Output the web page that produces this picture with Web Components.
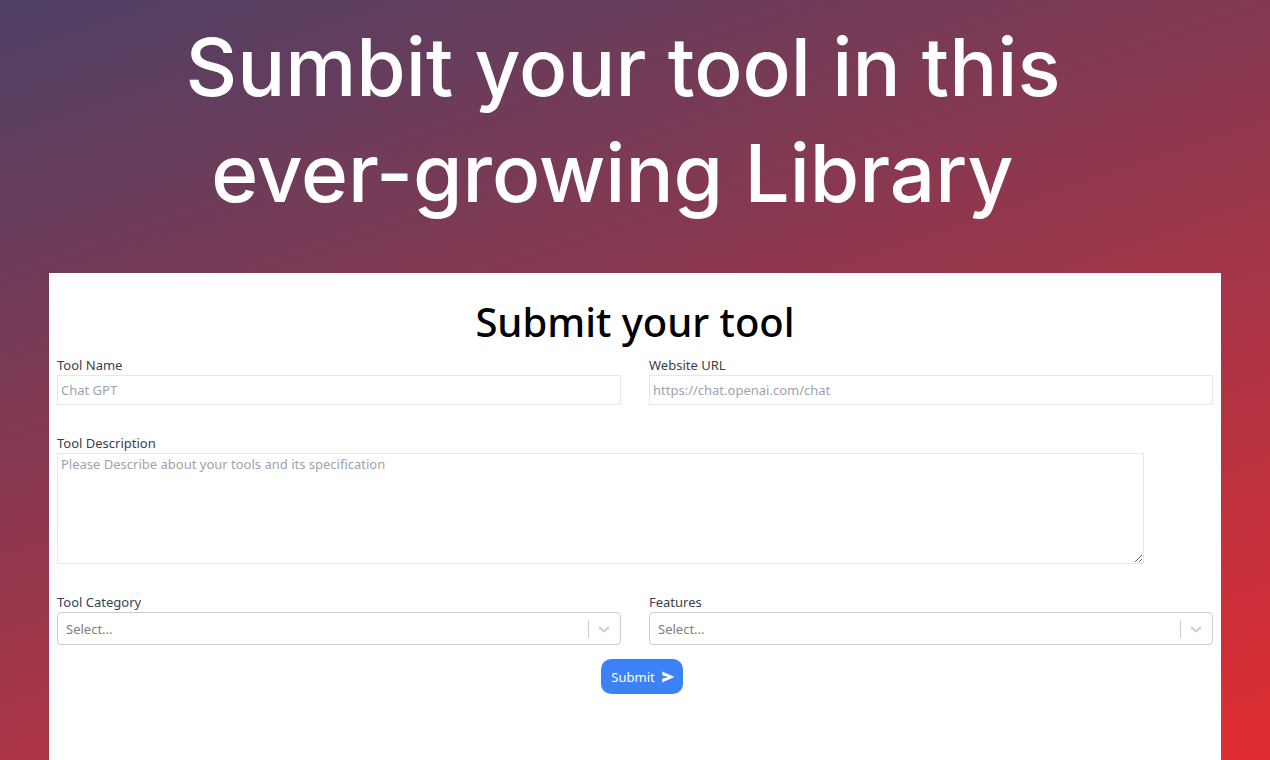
<!DOCTYPE html>
<html lang="en">
<head>
<meta charset="utf-8">
<meta name="viewport" content="width=device-width, initial-scale=1">
<title>Submit your tool</title>
<style>
    body{
        margin: 0;
        font-family: "Noto Sans", "Open Sans", sans-serif;
        font-size: 13px;
        line-height: 20px;
    }
</style>
</head>
<body>
<submit-page>
    <hero-title slot="hero">Sumbit your tool in this<br>ever-growing Library&nbsp;</hero-title>
    <tool-form heading="Submit your tool">
        <text-field name="name" label="Tool Name" placeholder="Chat GPT"></text-field>
        <text-field name="url" label="Website URL" placeholder="https://chat.openai.com/chat"></text-field>
        <area-field name="description" label="Tool Description" placeholder="Please Describe about your tools and its specification"></area-field>
        <select-field name="category" label="Tool Category" options="Writing,Image,Video,Code"></select-field>
        <select-field name="features" label="Features" options="Free,Freemium,Paid,API"></select-field>
        <submit-button slot="actions">Submit</submit-button>
    </tool-form>
</submit-page>

<script>
const fieldStyles = `
    :host{
        display: flex;
        flex-direction: column;
        min-width: 0;
    }
    label{
        color: #374151;
    }
    input, textarea, select{
        box-sizing: border-box;
        width: 100%;
        margin: 0;
        font: inherit;
        color: #374151;
        background: #fff;
        border: 1px solid #e5e7eb;
        border-radius: 0;
        outline: none;
    }
    input:focus, textarea:focus, select:focus{
        border-color: #3b82f6;
    }
    ::placeholder{
        color: #9ca3af;
        opacity: 1;
    }
`;

class SubmitPage extends HTMLElement{
    constructor(){
        super();
        this.attachShadow({mode: 'open'});
        this.shadowRoot.innerHTML = `
            <style>
                :host{
                    display: flex;
                    flex-direction: column;
                    min-height: 100vh;
                    background: linear-gradient(161deg, #4d4065, #e12d32);
                }
                main{
                    flex: 1;
                    display: flex;
                    margin: 0 49px;
                }
            </style>
            <slot name="hero"></slot>
            <main><slot></slot></main>
        `;
    }
}

class HeroTitle extends HTMLElement{
    constructor(){
        super();
        this.attachShadow({mode: 'open'});
        this.shadowRoot.innerHTML = `
            <style>
                :host{
                    display: block;
                    padding: 14px 24px 47px 0;
                }
                h1{
                    margin: 0;
                    font-family: Inter, sans-serif;
                    font-size: 80px;
                    font-weight: 500;
                    line-height: 106px;
                    text-align: center;
                    color: #fff;
                }
            </style>
            <h1><slot></slot></h1>
        `;
    }
}

class ToolForm extends HTMLElement{
    constructor(){
        super();
        this.attachShadow({mode: 'open'});
        this.shadowRoot.innerHTML = `
            <style>
                :host{
                    flex: 1;
                    min-width: 0;
                    box-sizing: border-box;
                    padding: 24px 8px;
                    background: #fff;
                }
                h2{
                    margin: 0 0 8px;
                    font-size: 40px;
                    font-weight: 500;
                    line-height: 50px;
                    text-align: center;
                    color: #000;
                }
                .fields{
                    display: grid;
                    grid-template-columns: repeat(2, minmax(0, 1fr));
                    gap: 28px;
                }
                .actions{
                    display: flex;
                    justify-content: center;
                    padding: 14px 0 24px 14px;
                }
            </style>
            <form>
                <h2></h2>
                <div class="fields"><slot></slot></div>
                <div class="actions"><slot name="actions"></slot></div>
            </form>
        `;
    }
    connectedCallback(){
        this.shadowRoot.querySelector('h2').textContent = this.getAttribute('heading');
        this.addEventListener('toolsubmit', () => {
            this.shadowRoot.querySelector('form').requestSubmit();
        });
        this.shadowRoot.querySelector('form').addEventListener('submit', (e) => {
            e.preventDefault();
        });
    }
}

class TextField extends HTMLElement{
    constructor(){
        super();
        this.attachShadow({mode: 'open'});
        this.shadowRoot.innerHTML = `
            <style>
                ${fieldStyles}
                input{
                    height: 30px;
                    padding: 0 3px;
                }
            </style>
            <label for="control"></label>
            <input id="control" type="text">
        `;
    }
    connectedCallback(){
        const control = this.shadowRoot.getElementById('control');
        this.shadowRoot.querySelector('label').textContent = this.getAttribute('label');
        control.name = this.getAttribute('name');
        control.placeholder = this.getAttribute('placeholder');
    }
}

class AreaField extends HTMLElement{
    constructor(){
        super();
        this.attachShadow({mode: 'open'});
        this.shadowRoot.innerHTML = `
            <style>
                ${fieldStyles}
                :host{
                    grid-column: 1 / -1;
                }
                textarea{
                    display: block;
                    width: 94%;
                    height: 111px;
                    padding: 0 3px;
                }
            </style>
            <label for="control"></label>
            <textarea id="control"></textarea>
        `;
    }
    connectedCallback(){
        const control = this.shadowRoot.getElementById('control');
        this.shadowRoot.querySelector('label').textContent = this.getAttribute('label');
        control.name = this.getAttribute('name');
        control.placeholder = this.getAttribute('placeholder');
    }
}

class SelectField extends HTMLElement{
    constructor(){
        super();
        this.attachShadow({mode: 'open'});
        this.shadowRoot.innerHTML = `
            <style>
                ${fieldStyles}
                .control{
                    display: grid;
                    align-items: center;
                }
                select, .indicator{
                    grid-area: 1 / 1;
                }
                select{
                    appearance: none;
                    height: 33px;
                    padding: 0 40px 0 8px;
                    color: #808080;
                    border-color: #ccc;
                    border-radius: 4px;
                }
                .indicator{
                    justify-self: end;
                    display: flex;
                    align-items: center;
                    box-sizing: border-box;
                    width: 33px;
                    height: 18px;
                    padding-left: 6px;
                    border-left: 1px solid #ccc;
                    pointer-events: none;
                }
                svg{
                    width: 18px;
                    height: 18px;
                    fill: #ccc;
                }
            </style>
            <label for="control"></label>
            <div class="control">
                <select id="control"><option value="">Select...</option></select>
                <span class="indicator">
                    <svg viewBox="0 0 20 20" aria-hidden="true"><path d="M4.516 7.548c0.436-0.446 1.043-0.481 1.576 0l3.908 3.747 3.908-3.747c0.533-0.481 1.141-0.446 1.574 0 0.436 0.445 0.408 1.197 0 1.615-0.406 0.418-4.695 4.502-4.695 4.502-0.217 0.223-0.502 0.335-0.787 0.335s-0.57-0.112-0.789-0.335c0 0-4.287-4.084-4.695-4.502s-0.436-1.17 0-1.615z"/></svg>
                </span>
            </div>
        `;
    }
    connectedCallback(){
        const control = this.shadowRoot.getElementById('control');
        this.shadowRoot.querySelector('label').textContent = this.getAttribute('label');
        control.name = this.getAttribute('name');
        this.getAttribute('options').split(',').forEach((text) => {
            control.add(new Option(text));
        });
    }
}

class SubmitButton extends HTMLElement{
    constructor(){
        super();
        this.attachShadow({mode: 'open'});
        this.shadowRoot.innerHTML = `
            <style>
                :host{
                    display: block;
                }
                button{
                    display: flex;
                    align-items: center;
                    gap: 6px;
                    height: 35px;
                    padding: 0 8px 0 10px;
                    font: inherit;
                    color: #fff;
                    background: #3b82f6;
                    border: none;
                    border-radius: 10px;
                    cursor: pointer;
                }
                button:hover{
                    background: #2563eb;
                }
                svg{
                    width: 14px;
                    height: 14px;
                    fill: #fff;
                }
            </style>
            <button type="button">
                <slot></slot>
                <svg viewBox="0 0 14 14" aria-hidden="true"><path d="M1 1.500 13.500 7 1 12.500 1.500 8.400 7.500 7 1.500 5.600Z"/></svg>
            </button>
        `;
    }
    connectedCallback(){
        this.shadowRoot.querySelector('button').addEventListener('click', () => {
            this.dispatchEvent(new CustomEvent('toolsubmit', {bubbles: true}));
        });
    }
}

window.customElements.define('submit-page', SubmitPage);
window.customElements.define('hero-title', HeroTitle);
window.customElements.define('tool-form', ToolForm);
window.customElements.define('text-field', TextField);
window.customElements.define('area-field', AreaField);
window.customElements.define('select-field', SelectField);
window.customElements.define('submit-button', SubmitButton);
</script>
</body>
</html>
